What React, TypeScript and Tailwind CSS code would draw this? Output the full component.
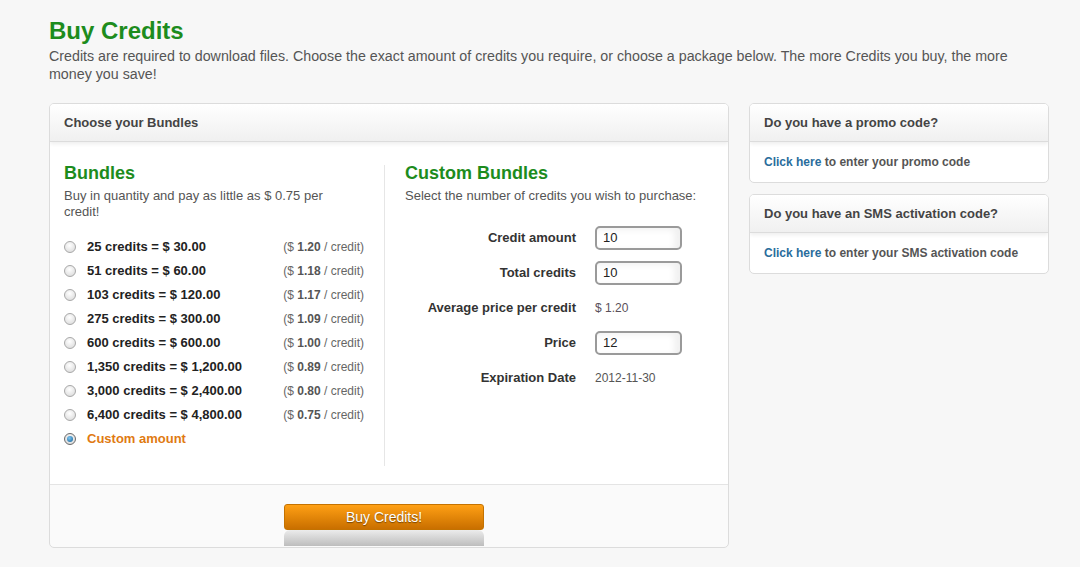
import { useState } from "react";

const bundles = [
  { credits: "25", price: "30.00", per: "1.20" },
  { credits: "51", price: "60.00", per: "1.18" },
  { credits: "103", price: "120.00", per: "1.17" },
  { credits: "275", price: "300.00", per: "1.09" },
  { credits: "600", price: "600.00", per: "1.00" },
  { credits: "1,350", price: "1,200.00", per: "0.89" },
  { credits: "3,000", price: "2,400.00", per: "0.80" },
  { credits: "6,400", price: "4,800.00", per: "0.75" },
];

function Radio({ checked }: { checked: boolean }) {
  return checked ? (
    <span className="flex w-[12px] h-[12px] shrink-0 items-center justify-center rounded-full border border-[#6a6a6a] bg-[radial-gradient(circle_at_50%_40%,#ffffff,#cfcfcf)]">
      <span className="w-[6px] h-[6px] rounded-full bg-[radial-gradient(circle_at_40%_35%,#7fc6f2,#0f5f96)]" />
    </span>
  ) : (
    <span className="block w-[12px] h-[12px] shrink-0 rounded-full border border-[#a8a8a8] bg-[radial-gradient(circle_at_45%_35%,#ffffff,#d6d6d6)]" />
  );
}

function PanelHeader({ title }: { title: string }) {
  return (
    <div className="relative z-10 h-[38px] flex items-center px-[14px] border-b border-[#dcdcdc] bg-gradient-to-b from-white to-[#f0f0f0] shadow-[0_2px_4px_rgba(0,0,0,0.07)] text-[13px] font-bold text-[#444]">
      {title}
    </div>
  );
}

function SidePanel({ title, text }: { title: string; text: string }) {
  return (
    <div className="rounded-[5px] border border-[#dcdcdc] bg-white overflow-hidden">
      <PanelHeader title={title} />
      <div className="h-[40px] flex items-center px-[14px] text-[12px] font-bold text-[#555]">
        <span className="text-[#2a6d9c]">Click here</span>&nbsp;{text}
      </div>
    </div>
  );
}

function App() {
  const [selected, setSelected] = useState(-1);

  return (
    <div className="min-h-screen bg-[#f7f7f7] pl-[49px] pt-[17px] font-['Liberation_Sans',Arial,sans-serif]">
      <h1 className="text-[24px] leading-[28px] font-bold text-[#1d8c1d]">
        Buy Credits
      </h1>
      <p className="mt-[2px] w-[985px] text-[14.25px] leading-[18px] text-[#555]">
        Credits are required to download files. Choose the exact amount of
        credits you require, or choose a package below. The more Credits you
        buy, the more money you save!
      </p>

      <div className="mt-[20px] flex items-start gap-[20px]">
        {/* main panel */}
        <div className="w-[680px] rounded-[5px] border border-[#dcdcdc] bg-[#fafafa] overflow-hidden">
          <PanelHeader title="Choose your Bundles" />

          <div className="flex bg-white pl-[14px] pt-[20px] pb-[18px]">
            {/* bundles */}
            <div className="w-[300px] pb-[15px]">
              <h2 className="text-[18px] leading-[22px] font-bold text-[#1d8c1d]">
                Bundles
              </h2>
              <p className="mt-[4px] w-[280px] text-[13px] leading-[16px] text-[#555]">
                Buy in quantity and pay as little as $ 0.75 per credit!
              </p>
              <ul className="mt-[15px]">
                {bundles.map((b, i) => (
                  <li
                    key={b.credits}
                    onClick={() => setSelected(i)}
                    className="h-[24px] flex items-center justify-between cursor-pointer"
                  >
                    <span className="flex items-center gap-[11px]">
                      <Radio checked={selected === i} />
                      <span className="text-[13px] font-bold text-[#222]">
                        {b.credits} credits = $ {b.price}
                      </span>
                    </span>
                    <span className="text-[12px] text-[#666]">
                      ($ <b className="text-[#555]">{b.per}</b> / credit)
                    </span>
                  </li>
                ))}
                <li
                  onClick={() => setSelected(-1)}
                  className="h-[24px] flex items-center gap-[11px] cursor-pointer"
                >
                  <Radio checked={selected === -1} />
                  <span className="text-[13px] font-bold text-[#e07a12]">
                    Custom amount
                  </span>
                </li>
              </ul>
            </div>

            <div className="ml-[20px] mt-[3px] w-px bg-[#e6e6e6]" />

            {/* custom bundles */}
            <div className="flex-1 pl-[20px]">
              <h2 className="text-[18px] leading-[22px] font-bold text-[#1d8c1d]">
                Custom Bundles
              </h2>
              <p className="mt-[4px] text-[13px] leading-[16px] text-[#555]">
                Select the number of credits you wish to purchase:
              </p>
              <div className="mt-[16px] grid grid-cols-[171px_1fr] gap-x-[19px] auto-rows-[35px] items-center text-[13px]">
                <label className="text-right font-bold text-[#333]">Credit amount</label>
                <input
                  type="text"
                  defaultValue="10"
                  className="w-[87px] h-[24px] rounded-[5px] border-2 border-[#9a9a9a] px-[6px] text-[13px] text-[#222] bg-white shadow-[inset_-6px_2px_6px_rgba(0,0,0,0.06)] outline-none"
                />
                <label className="text-right font-bold text-[#333]">Total credits</label>
                <input
                  type="text"
                  defaultValue="10"
                  className="w-[87px] h-[24px] rounded-[5px] border-2 border-[#9a9a9a] px-[6px] text-[13px] text-[#222] bg-white shadow-[inset_-6px_2px_6px_rgba(0,0,0,0.06)] outline-none"
                />
                <label className="text-right font-bold text-[#333]">Average price per credit</label>
                <span className="text-[12px] text-[#5a505a]">$ 1.20</span>
                <label className="text-right font-bold text-[#333]">Price</label>
                <input
                  type="text"
                  defaultValue="12"
                  className="w-[87px] h-[24px] rounded-[5px] border-2 border-[#9a9a9a] px-[6px] text-[13px] text-[#222] bg-white shadow-[inset_-6px_2px_6px_rgba(0,0,0,0.06)] outline-none"
                />
                <label className="text-right font-bold text-[#333]">Expiration Date</label>
                <span className="text-[12px] text-[#555]">2012-11-30</span>
              </div>
            </div>
          </div>

          {/* footer */}
          <div className="border-t border-[#e4e4e4] pt-[19px] pb-[1px] pr-[10px] flex flex-col items-center">
            <button
              type="button"
              className="w-[200px] h-[26px] rounded-[3px] border border-[#c47200] bg-gradient-to-b from-[#ffa014] to-[#c96f00] text-[14px] text-white [text-shadow:0_1px_1px_rgba(0,0,0,0.45)]"
            >
              Buy Credits!
            </button>
            <div className="w-[200px] h-[16px] rounded-t-[6px] bg-gradient-to-b from-[#ececec] to-[#bdbdbd]" />
          </div>
        </div>

        {/* side panels */}
        <div className="w-[300px] flex flex-col gap-[11px]">
          <SidePanel title="Do you have a promo code?" text="to enter your promo code" />
          <SidePanel
            title="Do you have an SMS activation code?"
            text="to enter your SMS activation code"
          />
        </div>
      </div>
    </div>
  );
}

export default App;
